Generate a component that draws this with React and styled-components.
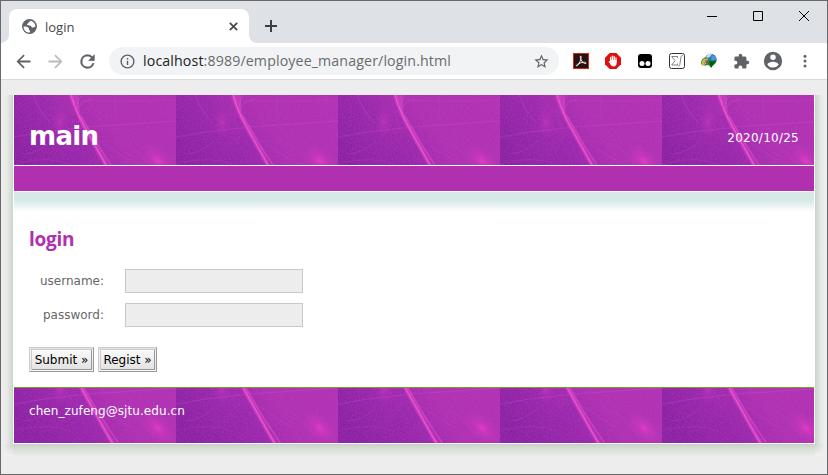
import React from "react";
import styled, { createGlobalStyle } from "styled-components";

const Global = createGlobalStyle`
  * { box-sizing: border-box; }
  html, body { margin: 0; padding: 0; overflow: hidden; }
`;

const BrowserWindow = styled.div`
  width: 828px;
  height: 475px;
  border: 1px solid #69696b;
  background: #ededed;
  display: flex;
  flex-direction: column;
  overflow: hidden;
`;

const TabStrip = styled.header`
  height: 42px;
  flex: none;
  display: flex;
  background: #dee1e6;
`;

const Tab = styled.div`
  position: relative;
  width: 240px;
  height: 34px;
  margin: 8px 0 0 8px;
  padding: 0 9px 0 12px;
  border-radius: 8px 8px 0 0;
  background: #fff;
  display: flex;
  align-items: center;
  &::before, &::after {
    content: "";
    position: absolute;
    bottom: 0;
    width: 8px;
    height: 8px;
  }
  &::before { left: -8px; background: radial-gradient(circle at 0 0, transparent 7.5px, #fff 8.2px); }
  &::after { right: -8px; background: radial-gradient(circle at 100% 0, transparent 7.5px, #fff 8.2px); }
`;

const TabTitle = styled.span`
  flex: 1;
  margin-left: 7px;
  font: 13px/16px "Open Sans", "Noto Sans", sans-serif;
  color: #45484c;
  padding-top: 2px;
`;

const IconSlot = styled.span`
  width: ${(p) => p.$w || 32}px;
  flex: none;
  display: flex;
  align-items: center;
  justify-content: center;
  svg { display: block; }
`;

const NewTab = styled(IconSlot)`
  height: 34px;
  margin: 8px 0 0 6px;
`;

const WindowControls = styled.div`
  height: 29px;
  margin-left: auto;
  display: flex;
`;

const Toolbar = styled.div`
  height: 37px;
  flex: none;
  padding-left: 6px;
  display: flex;
  align-items: center;
  background: #fff;
  border-bottom: 1px solid #d9dadc;
`;

const AddressBar = styled.div`
  width: 450px;
  height: 28px;
  margin: 0 6px;
  border-radius: 14px;
  background: #f1f3f4;
  display: flex;
  align-items: center;
`;

const Url = styled.span`
  flex: 1;
  margin-left: -2px;
  font: 14.2px/20px "Open Sans", "Noto Sans", sans-serif;
  letter-spacing: 0.13px;
  white-space: nowrap;
  color: #686b70;
  b { font-weight: 400; color: #202124; }
`;

const Page = styled.main`
  padding: 15px 3px 0 3px;
  font-family: "DejaVu Sans", Verdana, sans-serif;
  font-size: 12px;
`;

const ShadowFrame = styled.div`
  display: grid;
  grid-template-columns: 9px 802px 9px;
  grid-template-rows: 349px 12px;
`;

const Shade = styled.div`
  background: ${(p) => p.$fill};
`;

const Sheet = styled.div`
  border: solid #fff;
  border-width: 0 1px 1px;
  background: #fff;
  display: flex;
  flex-direction: column;
`;

const Band = styled.div`
  display: grid;
  height: ${(p) => p.$height}px;
  border-top: ${(p) => (p.$rule ? "1px solid #70a51f" : "0")};
  overflow: hidden;
  > * { grid-area: 1 / 1; }
  > svg { display: block; }
`;

const BandText = styled.div`
  display: flex;
  justify-content: space-between;
  align-items: flex-start;
  padding: 0 15px;
  z-index: 1;
  color: #fff;
  white-space: nowrap;
`;

const SiteTitle = styled.h1`
  margin: 24px 0 0;
  font-size: 26px;
  line-height: 34px;
  font-weight: 700;
  letter-spacing: -0.7px;
`;

const DateText = styled.span`
  margin-top: 35px;
  line-height: 16px;
  letter-spacing: 0.25px;
`;

const Contact = styled.span`
  margin-top: 15px;
  line-height: 16px;
  letter-spacing: 0.07px;
`;

const NavBar = styled.nav`
  height: 25px;
  margin: 1px 0;
  background: #b030b0;
`;

const Content = styled.section`
  flex: 1;
  padding: 34px 15px 0;
  background: linear-gradient(#d6e9e7 0 8px, #fff 20px) no-repeat 0 0 / 100% 22px;
`;

const Heading = styled.h2`
  margin: 0;
  font: 700 19px/26px "Open Sans", sans-serif;
  letter-spacing: -0.3px;
  color: #b030b0;
`;

const Field = styled.label`
  display: flex;
  align-items: center;
  height: 24px;
  margin-top: ${(p) => p.$gap}px;
  color: #666;
  span { width: 75px; margin-right: 21px; text-align: right; }
`;

const Input = styled.input`
  width: 178px;
  height: 24px;
  border: 1px solid #c8c8c8;
  background: #ededed;
  outline: 0;
`;

const Actions = styled.div`
  display: flex;
  gap: 4px;
  margin-top: 20px;
`;

const Button = styled.button`
  width: ${(p) => p.$w}px;
  height: 25px;
  padding: 1px 0 0;
  border: 3px double;
  border-color: #ccc #999 #999 #ccc;
  background: linear-gradient(#fafafa, #e2e2e2);
  font: 12px/17px "DejaVu Sans", Verdana, sans-serif;
  white-space: nowrap;
  color: #000;
`;

const Glyph = ({ size = 20, box = 24, color = "#5f6368", children }) => (
  <svg width={size} height={size} viewBox={`0 0 ${box} ${box}`} fill={color}>{children}</svg>
);

function Nebula({ height, offset, id }) {
  return (
    <svg width="800" height={height}>
      <defs>
        <linearGradient id={`${id}base`} x1="0" y1=".65" x2="1" y2=".3">
          <stop offset="0" stopColor="#8920a1" />
          <stop offset=".35" stopColor="#9c28ab" />
          <stop offset=".6" stopColor="#b030b1" />
          <stop offset="1" stopColor="#b231b3" />
        </linearGradient>
        <radialGradient id={`${id}glow`}>
          <stop offset="0" stopColor="#f23bc8" />
          <stop offset=".3" stopColor="#dc38be" stopOpacity=".6" />
          <stop offset="1" stopColor="#c034b8" stopOpacity="0" />
        </radialGradient>
        <filter id={`${id}grain`} x="0" y="0" width="100%" height="100%">
          <feTurbulence type="fractalNoise" baseFrequency=".7" numOctaves="2" seed="4" />
          <feColorMatrix values="0 0 0 0 .45  0 0 0 0 .08  0 0 0 0 .6  1.4 0 0 0 -.5" />
        </filter>
        <pattern id={`${id}tile`} width="162" height="82" y={-offset} patternUnits="userSpaceOnUse">
          <rect width="162" height="82" fill={`url(#${id}base)`} />
          <path d="M57 0Q70 42 99 82H0V70Q50 78 65 40Z" fill="#8e20a6" opacity=".22" />
          <ellipse cx="46" cy="27" rx="9" ry="17" fill={`url(#${id}glow)`} opacity=".42" />
          <ellipse cx="144" cy="66" rx="23" ry="13" transform="rotate(42 144 66)" fill={`url(#${id}glow)`} opacity=".85" />
          <g fill="none" stroke="#d655c8" strokeWidth=".6">
            <path d="M19 0Q26 18 37 28" opacity=".55" />
            <path d="M0 42L30 37L74 32L162 26" opacity=".45" />
            <path d="M10 59Q29 57 38 45M0 69Q34 60 55 69" opacity=".3" />
            <path d="M101 0V24M76 5Q100 7 162 5" opacity=".25" />
            <path d="M80 42Q97 55 116 65M113 49Q128 58 139 75" opacity=".28" />
            <path d="M66 26Q60 7 68 0M65 17Q64 5 77 5" opacity=".6" />
          </g>
          <path d="M57 0L65 16V0Z" fill="#e24bc8" opacity=".45" />
          <path d="M57 0Q62 16 69 29L92 70L99 82" fill="none" stroke="#d33dc1" strokeWidth="4.500" opacity=".6" />
          <path d="M57 0Q62 16 69 29L92 70L99 82" fill="none" stroke="#f352d0" strokeWidth="1.5" />
          <path d="M67 21L84 50L95 67L105 82" fill="none" stroke="#e047c5" strokeWidth="1.500" opacity=".65" />
          <rect width="162" height="82" filter={`url(#${id}grain)`} opacity=".5" />
        </pattern>
      </defs>
      <rect width="800" height={height} fill={`url(#${id}tile)`} />
    </svg>
  );
}

const PdfIcon = () => (
  <Glyph size={16} box={16}>
    <path fill="#d52b16" d="M0 0h16v16H0z" /><path fill="#2b1012" d="M1 1h14v14H1z" />
    <path d="M7.3 3.2c1.3-1 1 2.2-.2 5.1-1 2.5-2.6 5-3.5 4.7-1.4-.8 3.1-3.3 6.6-3.7 3.1-.4 3.8 1.2 2.1 1.3-2.2 0-5.5-4.5-5-7.4Z" fill="none" stroke="#eee" strokeWidth="1" />
  </Glyph>
);

const HandIcon = () => (
  <Glyph size={16} box={16}>
    <path fill="#e40d0d" d="M4.7 0h6.6L16 4.7v6.6L11.3 16H4.7L0 11.3V4.7Z" />
    <path d="M5.6 8V4.5M7.4 8V3.2M9.2 8V3.6M11 9V5" stroke="#fff" strokeWidth="1.3" strokeLinecap="round" />
    <path fill="#fff" d="M5 7h6.6v3.2c0 2-1 3.2-3 3.2-1.7 0-2.5-.8-3.2-2.1L3.6 8.6c.1-.8.9-.7 1.4-.1Z" />
  </Glyph>
);

const MonkeyIcon = () => (
  <Glyph size={14} box={14} color="#000">
    <path d="M3 0h8q3 0 3 3v8q0 3-3 3H3q-3 0-3-3V3q0-3 3-3Z" />
    <circle cx="4" cy="9.6" r="2.5" fill="#fff" /><circle cx="10" cy="9.6" r="2.5" fill="#fff" />
  </Glyph>
);

const FormulaIcon = () => (
  <Glyph size={16} box={16} color="none">
    <rect x=".5" y=".5" width="15" height="15" rx="2" stroke="#333" fill="#fff" />
    <path d="M8.500 5V3.500H2.700L6 7.700 2.700 12h5.800v-1.500M14 2.700c-1.200-.5-1.800.1-2 1.500l-1.200 7.300c-.2 1.300-.8 1.800-1.700 1.300" stroke="#666" strokeWidth=".8" />
  </Glyph>
);

const DownloadGlobe = () => (
  <Glyph size={16} box={16}>
    <circle cx="9.7" cy="6.7" r="6" fill="#2874bd" />
    <path d="M5 3q3-3 6-2l-2 3-3 1Z" fill="#c5dfe0" />
    <path d="M11 2q4 1 4 4l-3 2-2-2Z" fill="#4a9bd2" />
    <path d="M.7 11.500Q-.2 6 6 4.500" fill="none" stroke="#4da33b" strokeWidth="1.300" />
    <path d="M1.700 12.500Q1.500 7 7 6" fill="none" stroke="#e7ac26" strokeWidth="1.400" />
    <path d="M3 12.500Q3 8.500 7 7.500" fill="none" stroke="#dc572c" strokeWidth="1.200" />
    <path d="M3.500 13Q4.500 9 8 9V7l7.500 1L10 15l-2-3Q6 11.500 3.500 13Z" fill="#258b24" />
    <path d="M8 8.500l7-.5-5 6.500Z" fill="#07570c" />
  </Glyph>
);

export default function App() {
  return (
    <BrowserWindow>
      <Global />
      <TabStrip>
        <Tab>
          <Glyph size={17}>
            <circle cx="12" cy="12" r="10.5" />
            <path fill="#fff" d="M3.6 12.2c2.4-.2 5 0 6.7 1.4 1.4 1.1.2 2.4 1.5 3.3.8.7 1 2 .8 3.6-5 .2-9-3.4-9-8.3ZM13.5 3.8c-.6 1.6-3 1.2-3 2.9 0 1.4-2 .8-2 2.3 0 1.7 3.2 1 5 1.8 1.3.6.8 2.4 2.7 2.6 1.7.2 2.2-1.3 4.2-1.1.2-4.3-2.6-7.5-6.9-8.5Z" />
          </Glyph>
          <TabTitle>login</TabTitle>
          <IconSlot $w={14}><Glyph size={9} box={9}><path d="M.8.8l7.4 7.4M8.2.8L.8 8.2" stroke="#45484c" strokeWidth="1.7" /></Glyph></IconSlot>
        </Tab>
        <NewTab><Glyph size={12} box={12}><path d="M6 0v12M0 6h12" stroke="#3c4043" strokeWidth="2" /></Glyph></NewTab>
        <WindowControls>
          <IconSlot $w={46}><Glyph size={10} box={10}><path d="M0 5.5h10" stroke="#000" /></Glyph></IconSlot>
          <IconSlot $w={46}><Glyph size={10} box={10}><path d="M.5.5h9v9h-9z" fill="none" stroke="#000" /></Glyph></IconSlot>
          <IconSlot $w={46}><Glyph size={10} box={10}><path d="M0 0l10 10M10 0L0 10" stroke="#000" /></Glyph></IconSlot>
        </WindowControls>
      </TabStrip>
      <Toolbar>
        <IconSlot><Glyph size={21}><path d="M20 10.800H7.800l5.600-5.400L12 4l-8 8 8 8 1.400-1.400L7.800 13.200H20z" /></Glyph></IconSlot>
        <IconSlot><Glyph size={21} color="#bababa"><path d="M4 10.800h12.200l-5.600-5.400L12 4l8 8-8 8-1.400-1.400 5.600-5.400H4z" /></Glyph></IconSlot>
        <IconSlot><Glyph size={21}><path stroke="#5f6368" strokeWidth=".4" d="M17.65 6.35A7.95 7.95 0 0 0 12 4a8 8 0 1 0 7.73 10h-2.08A6 6 0 1 1 12 6c1.66 0 3.14.69 4.22 1.78L13 11h7V4z" /></Glyph></IconSlot>
        <AddressBar>
          <IconSlot $w={36}><Glyph size={17}><path d="M11 17h2v-6h-2zm1-15a10 10 0 1 0 0 20 10 10 0 0 0 0-20zm0 18a8 8 0 1 1 0-16 8 8 0 0 1 0 16zM11 9h2V7h-2z" /></Glyph></IconSlot>
          <Url><b>localhost</b>:8989/employee_manager/login.html</Url>
          <IconSlot $w={36}><Glyph size={17}><path d="M22 9.24l-7.19-.62L12 2 9.19 8.63 2 9.24l5.46 4.73L5.82 21 12 17.27 18.18 21l-1.63-7.03zM12 15.4l-3.76 2.27 1-4.28-3.32-2.88 4.38-.38L12 6.1l1.71 4.04 4.38.38-3.32 2.88 1 4.28z" /></Glyph></IconSlot>
        </AddressBar>
        <IconSlot><PdfIcon /></IconSlot>
        <IconSlot><HandIcon /></IconSlot>
        <IconSlot><MonkeyIcon /></IconSlot>
        <IconSlot><FormulaIcon /></IconSlot>
        <IconSlot><DownloadGlobe /></IconSlot>
        <IconSlot><Glyph size={17}><path d="M20.5 11H19V7a2 2 0 0 0-2-2h-4V3.500a2.500 2.500 0 0 0-5 0V5H4a2 2 0 0 0-1.990 2v3.800H3.500a2.700 2.700 0 0 1 0 5.400H2V20a2 2 0 0 0 2 2h3.800v-1.500a2.700 2.700 0 0 1 5.400 0V22H17a2 2 0 0 0 2-2v-4h1.500a2.500 2.500 0 0 0 0-5z" /></Glyph></IconSlot>
        <IconSlot><Glyph size={22}><path d="M12 2a10 10 0 1 0 0 20 10 10 0 0 0 0-20zm0 3a3 3 0 1 1 0 6 3 3 0 0 1 0-6zm0 14.200A7.200 7.200 0 0 1 6 15.980c.030-1.990 4-3.080 6-3.080s5.970 1.090 6 3.080a7.200 7.200 0 0 1-6 3.220z" /></Glyph></IconSlot>
        <IconSlot><Glyph size={18}><circle cx="12" cy="5.500" r="2" /><circle cx="12" cy="12" r="2" /><circle cx="12" cy="18.500" r="2" /></Glyph></IconSlot>
      </Toolbar>
      <Page>
        <ShadowFrame>
          <Shade $fill="linear-gradient(90deg, #ededed, #e6e9e5 35%, #cbd5cb)" />
          <Sheet>
            <Band $height={70}>
              <Nebula id="top" height={70} offset={0} />
              <BandText><SiteTitle>main</SiteTitle><DateText>2020/10/25</DateText></BandText>
            </Band>
            <NavBar />
            <Content>
              <Heading>login</Heading>
              <Field $gap={17}><span>username:</span><Input type="text" /></Field>
              <Field $gap={10}><span>password:</span><Input type="password" /></Field>
              <Actions><Button $w={65}>Submit »</Button><Button $w={59}>Regist »</Button></Actions>
            </Content>
            <Band $height={56} $rule>
              <Nebula id="foot" height={55} offset={26} />
              <BandText><Contact>chen_zufeng@sjtu.edu.cn</Contact></BandText>
            </Band>
          </Sheet>
          <Shade $fill="linear-gradient(270deg, #ededed, #e6e9e5 35%, #cbd2ca)" />
          <Shade $fill="radial-gradient(circle at 100% 0, #ced6ce, #e6e9e5 8px, #f0f0f0 12px)" />
          <Shade $fill="linear-gradient(#c8d1c8, #dce2db 55%, #ebeceb)" />
          <Shade $fill="radial-gradient(circle at 0 0, #ced6ce, #e6e9e5 8px, #f0f0f0 12px)" />
        </ShadowFrame>
      </Page>
    </BrowserWindow>
  );
}
